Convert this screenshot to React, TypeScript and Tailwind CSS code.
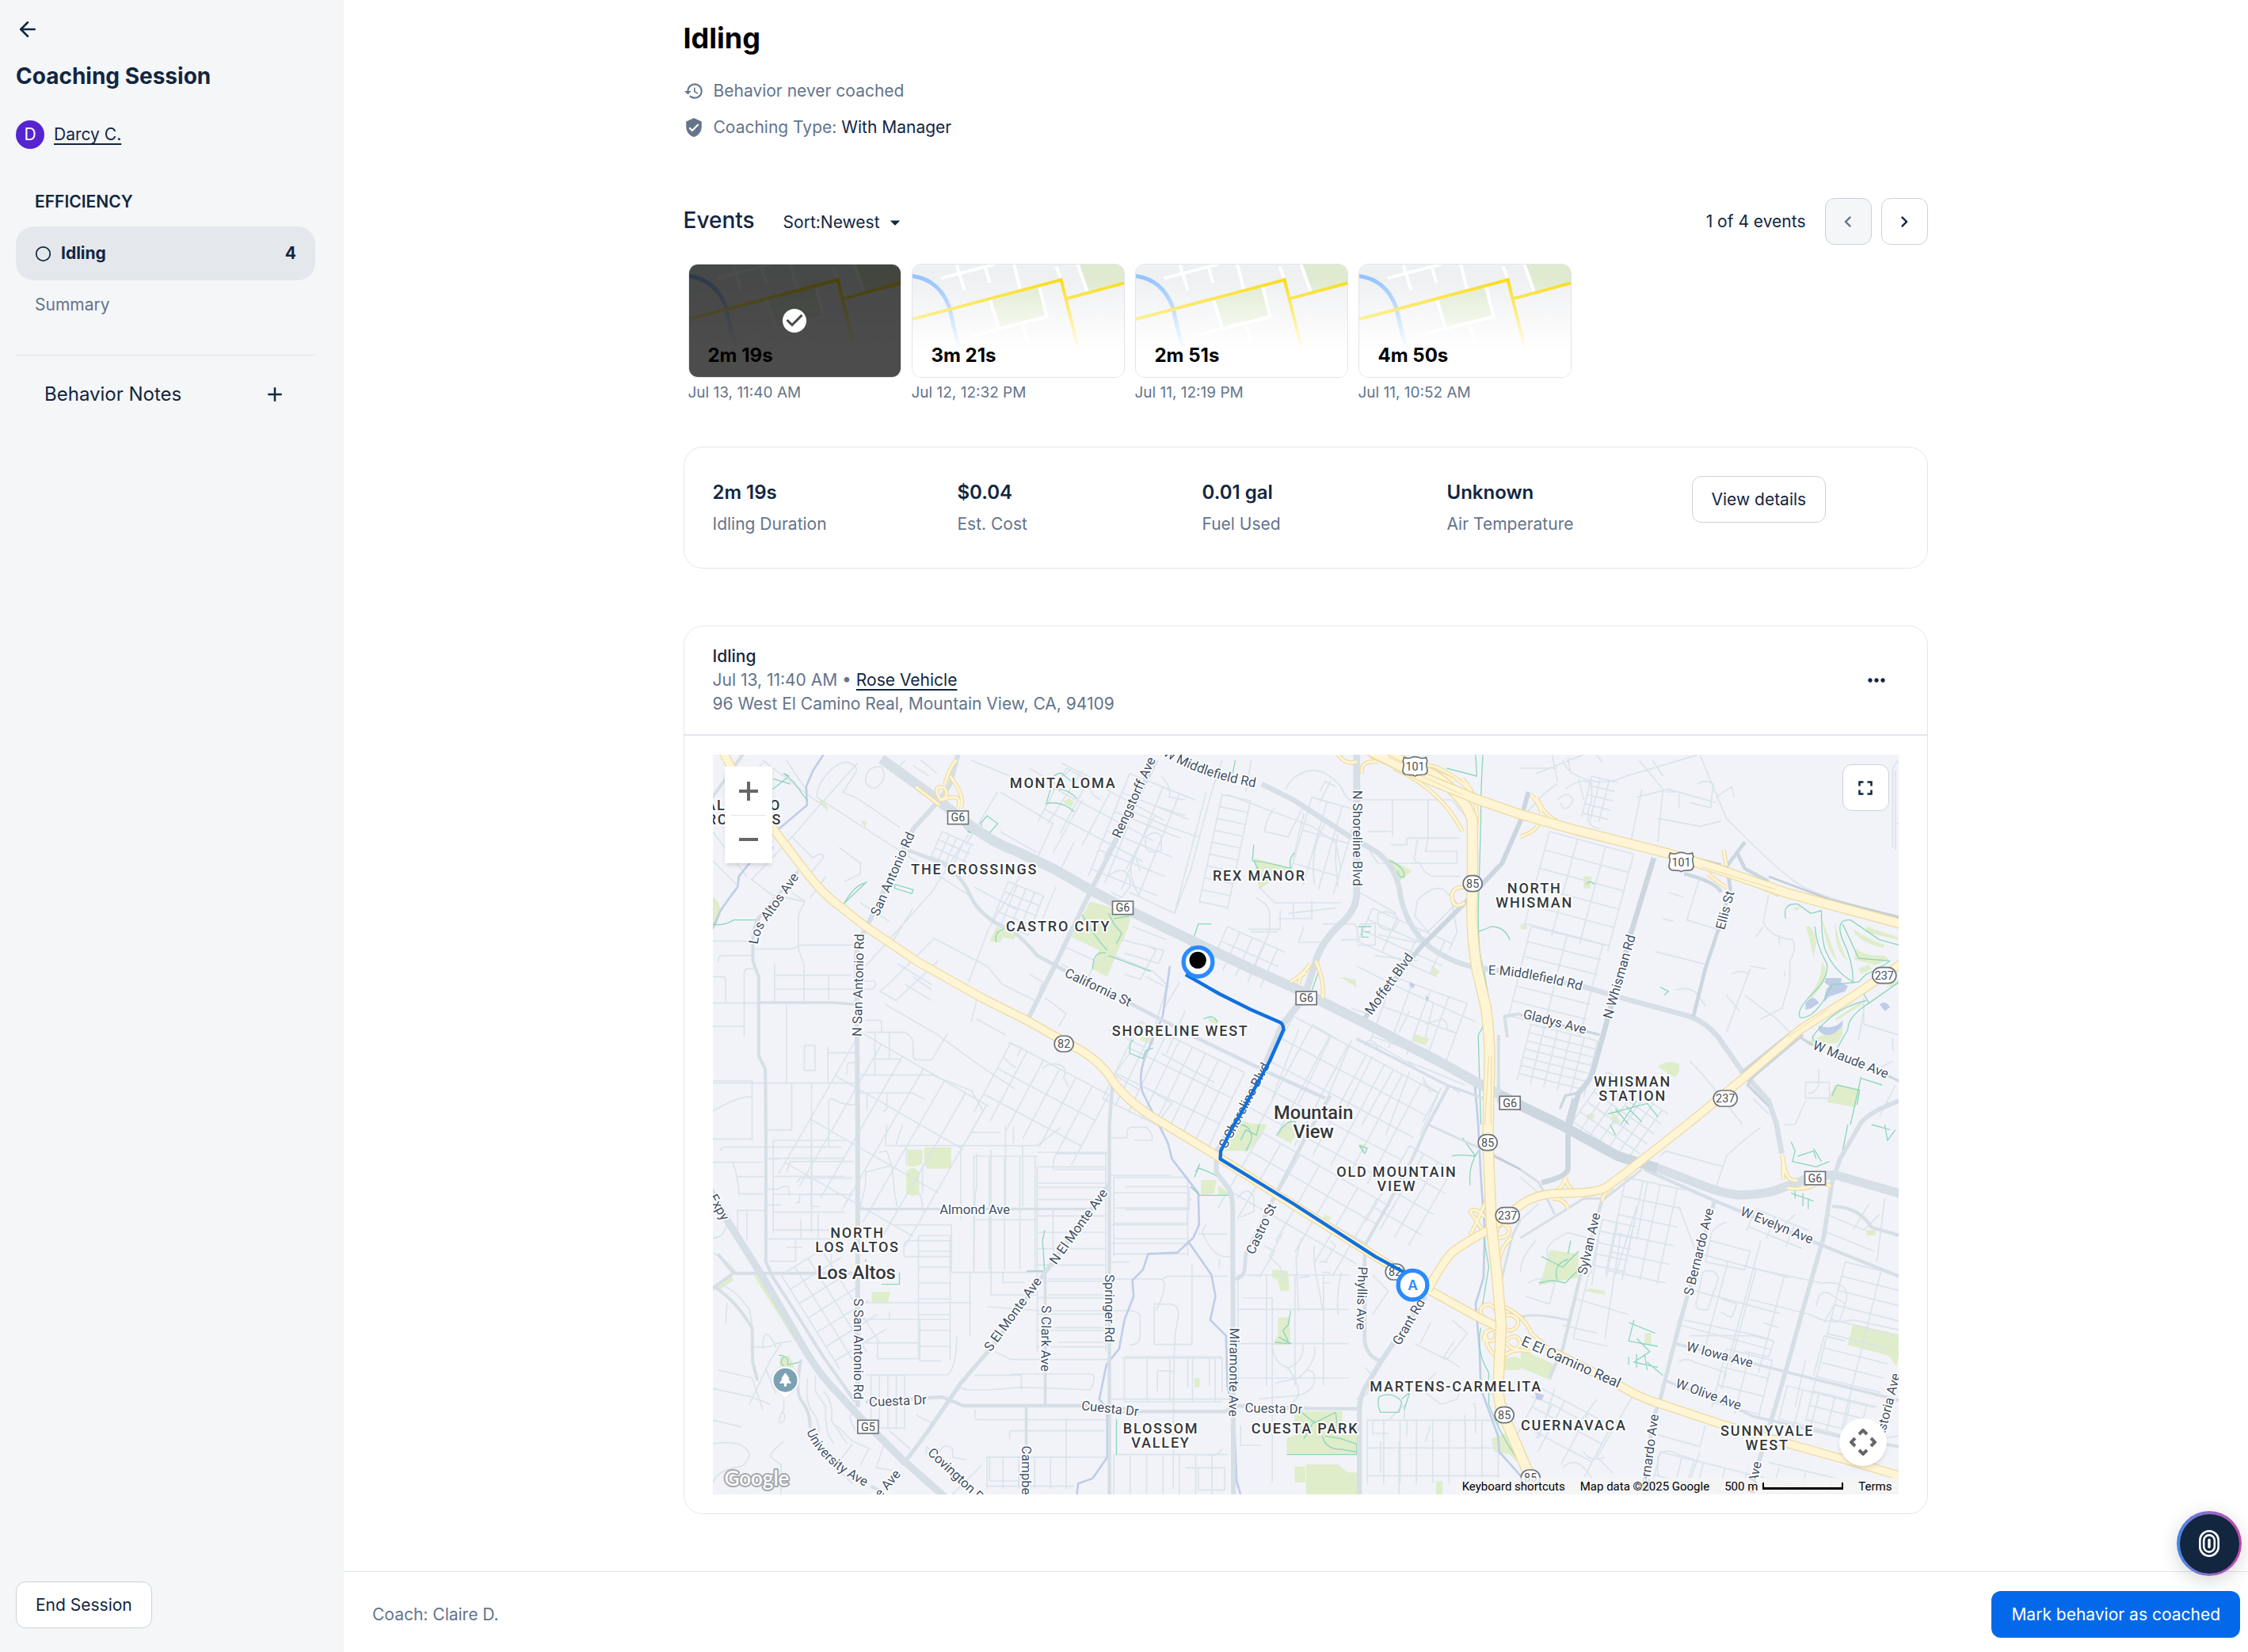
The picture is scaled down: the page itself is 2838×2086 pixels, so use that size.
import React from 'react';
import { ArrowLeft, Circle } from 'lucide-react';
import {
  MdAdd,
  MdArrowDropDown,
  MdCheckCircle,
  MdChevronLeft,
  MdChevronRight,
  MdFullscreen,
  MdHistory,
  MdMoreHoriz,
  MdVerifiedUser,
} from 'react-icons/md';

const events = [
  { duration: '2m 19s', date: 'Jul 13, 11:40 AM', selected: true },
  { duration: '3m 21s', date: 'Jul 12, 12:32 PM', selected: false },
  { duration: '2m 51s', date: 'Jul 11, 12:19 PM', selected: false },
  { duration: '4m 50s', date: 'Jul 11, 10:52 AM', selected: false },
];

const stats = [
  { value: '2m 19s', label: 'Idling Duration' },
  { value: '$0.04', label: 'Est. Cost' },
  { value: '0.01 gal', label: 'Fuel Used' },
  { value: 'Unknown', label: 'Air Temperature' },
];

/* ---------- map data (map units, 3 per screen pixel) ---------- */

// residential blocks: origin, size, rotation, spacing between streets
const blocks = [
  { x: 620, y: 1090, w: 560, h: 620, a: 30, sx: 92, sy: 190 },
  { x: 1190, y: 1130, w: 420, h: 300, a: 28, sx: 70, sy: 110 },
  { x: 1180, y: 520, w: 150, h: 160, a: 22, sx: 36, sy: 40 },
  { x: 930, y: 330, w: 130, h: 110, a: 24, sx: 30, sy: 34 },
  { x: 1400, y: 90, w: 420, h: 230, a: 28, sx: 95, sy: 88 },
  { x: 1640, y: 110, w: 270, h: 420, a: 22, sx: 68, sy: 78 },
  { x: 1990, y: 190, w: 110, h: 420, a: 12, sx: 110, sy: 46 },
  { x: 2330, y: 200, w: 180, h: 330, a: 16, sx: 60, sy: 130 },
  { x: 2010, y: 690, w: 240, h: 160, a: 24, sx: 52, sy: 60 },
  { x: 1680, y: 1050, w: 440, h: 330, a: 26, sx: 55, sy: 108 },
  { x: 2260, y: 1030, w: 620, h: 430, a: 28, sx: 78, sy: 96 },
  { x: 2140, y: 1470, w: 560, h: 330, a: 30, sx: 84, sy: 84 },
  { x: 2700, y: 1520, w: 210, h: 330, a: 30, sx: 62, sy: 90 },
  { x: 2560, y: 620, w: 330, h: 140, a: 24, sx: 100, sy: 46 },
  { x: 2640, y: 880, w: 300, h: 260, a: 20, sx: 74, sy: 120 },
  { x: 3230, y: 330, w: 330, h: 380, a: 15, sx: 110, sy: 72 },
  { x: 3160, y: 690, w: 290, h: 360, a: 14, sx: 140, sy: 58 },
  { x: 3390, y: 120, w: 100, h: 160, a: 14, sx: 34, sy: 36 },
  { x: 3160, y: 1060, w: 260, h: 220, a: 14, sx: 52, sy: 32 },
  { x: 3450, y: 1240, w: 280, h: 250, a: 35, sx: 42, sy: 46 },
  { x: 3520, y: 1640, w: 230, h: 370, a: 12, sx: 66, sy: 72 },
  { x: 3430, y: 1800, w: 130, h: 210, a: 12, sx: 60, sy: 44 },
  { x: 3800, y: 1930, w: 350, h: 380, a: 15, sx: 110, sy: 140 },
  { x: 4350, y: 1960, w: 250, h: 620, a: 14, sx: 140, sy: 56 },
  { x: 4130, y: 2430, w: 340, h: 130, a: 14, sx: 62, sy: 130 },
  { x: 3900, y: 2290, w: 180, h: 230, a: 14, sx: 90, sy: 70 },
  { x: 4010, y: 1760, w: 220, h: 90, a: 22, sx: 80, sy: 36 },
  { x: 3200, y: 2440, w: 300, h: 220, a: 28, sx: 100, sy: 78 },
  { x: 3650, y: 2680, w: 560, h: 150, a: 14, sx: 84, sy: 90 },
  { x: 2540, y: 2560, w: 500, h: 240, a: 0, sx: 62, sy: 105 },
  { x: 2050, y: 2010, w: 420, h: 420, a: 0, sx: 108, sy: 130 },
  { x: 1580, y: 1640, w: 280, h: 300, a: 0, sx: 280, sy: 58 },
  { x: 1620, y: 2320, w: 370, h: 170, a: 0, sx: 86, sy: 170 },
  { x: 1580, y: 2690, w: 430, h: 160, a: 0, sx: 62, sy: 160 },
  { x: 840, y: 1860, w: 120, h: 470, a: 0, sx: 120, sy: 60 },
  { x: 1050, y: 1560, w: 240, h: 430, a: 0, sx: 58, sy: 240 },
  { x: 1290, y: 1600, w: 260, h: 700, a: 0, sx: 260, sy: 62 },
  { x: 660, y: 2390, w: 130, h: 200, a: 0, sx: 32, sy: 200 },
  { x: 320, y: 2010, w: 230, h: 420, a: -32, sx: 60, sy: 64 },
  { x: 290, y: 1500, w: 270, h: 350, a: 0, sx: 145, sy: 68 },
  { x: 1100, y: 2700, w: 330, h: 120, a: 0, sx: 60, sy: 110 },
];

const minorRoads = [
  // west side
  'M60 745h150M210 775h150l40 -15h190M360 560l50 35 -25 50v130l22 60v150M295 830v150M295 875h290M295 927h370q20 -15 10 -30h-60M500 875v90M60 880h40q10 0 10 10v85M180 1105v-240q0 -15 15 -15h30M82 825v-10q0 -15 15 -15h115M60 980h175M60 1068h120M340 985v300M60 1283h545M408 1140h40v95h-40zM497 1145v135M497 1168h105M570 1250v-30q0 -15 15 -15h20',
  'M620 1252h270l150 60 45 75 -60 110M675 1090v160M675 1192h95M640 1090h150q30 20 30 40v50q0 15 15 15h55l60 -100M730 1090v100M640 1045h50q10 0 10 10v35M715 985l190 110 180 130 120 80M360 1285v175h-95M435 1285v460M210 1500v-225h-150M60 1390q100 -60 150 -55M605 1320h210l50 25M645 1320v70M720 1320v60q0 8 -15 8M500 1520v-165q0 -20 30 -5 20 15 70 15',
  'M60 330l130 170M205 510l80 60 125 25M210 510l170 -180 50 -60 180 -200M550 180l60 25 160 110M455 200l590 380M455 200q0 -50 50 -100 60 -60 100 -10v10l-50 80M900 735l200 105 60 70 120 60M900 735l-170 170 -35 30 60 35 160 -150M640 840l250 -280 140 -220M1030 900l75 -200 120 -200M1050 540l160 85M760 830l130 80M790 910l100 60M820 880l70 50M820 620l-80 130M250 60l210 160M340 60l80 120M190 140l60 -70M120 60l60 90M60 440l90 90M360 350l60 60 20 20q40 -30 40 0l-50 60M540 390l80 60v40l-60 30M430 580l60 -80M620 600l110 70',
  'M640 140q0 -60 60 -55 20 30 0 60 -30 40 -60 0zM790 60l-30 30 60 50M820 80l60 40M850 60l60 50M1040 60l220 90M1140 180l-120 200M1150 180l200 120 -60 130M1260 90l100 60 60 -60M1330 300l130 -200M1150 330l140 80M1440 160q40 -30 60 30l30 20M1460 210l-110 200M1380 70l180 90M1290 430l80 60 60 -120M1360 540l-50 120M1380 760l130 60 -30 70 -100 -60M1260 870l50 30 -20 60M1320 960l80 60 -30 50M1040 1050l20 -80M1060 1040l110 60M1310 1230q10 -20 50 -20 50 10 30 50l20 40M1160 1180q20 30 50 45M1180 1130l50 20 -15 30',
  'M60 1490q0 5 5 5h145M90 1540q0 -15 20 -15h440M60 1583h190M135 1583q20 40 25 120h95M155 1637h100M340 1620l15 -40h240M380 1660l10 -17h200M375 1735h15v-30h200M270 1685h40q45 -30 40 20M435 1560v190h30M270 1570h40M270 1745h50M60 1870q40 0 50 -40l20 -25M155 1845v-80h105M190 1880v-110M270 1873h240v120M375 1873v85h-100M340 1905h60M395 1800v70M60 1925q70 40 90 80M460 1780v90M720 1520h570M795 1525v70M740 1595l-100 25v50l-15 60 -5 25M690 1545l30 -5 20 60 10 100 10 50M755 1515l25 -75M865 1590l-10 10v100M840 1700q15 10 15 60M720 1440l-5 80',
  'M750 1820h215v180M785 1940v-40q0 -20 20 -20h160M785 1940h180M630 2000h-20M965 2000h345M1000 1520v280M1060 1550v130q-10 20 -10 320M1110 1820q10 -30 0 -60M1115 1535v550h180M1170 1440v310M1160 1998v40h80M1235 1520v230M1290 1545h280M1290 1678h270M1350 1610q0 -60 20 -60h180v60h-200M1380 1450l-90 70M1040 1470h110M1200 1510v-60M1350 1760v220M1330 2025h220M1330 2085h210M1330 2145h220M1350 2210h200M1370 2265h190M1100 2130l200 15M1130 2300l60 30h370M845 2115h115M845 2180v155h80M630 2115h410M630 2178h330M685 2267v60h150M640 2267h200M640 2388h310q35 -30 35 -148M730 2178v-30M1035 2000v240M990 2430q20 15 40 15h80l120 -10 260 10q15 -20 15 -50 0 -10 -15 -10h-300M1050 2390h180v55M1055 2520v30q0 8 10 8h490M1400 2558v140M1185 2630v-20q0 -10 10 -10h350M1095 2700h460M1110 2700v85q0 5 5 5h130',
  'M60 2070l30 -30 60 40 50 60 10 60M115 2115l-5 80M60 2440l140 30 80 30M80 2370l130 30 40 120M60 2560l110 25M60 2650q120 -20 140 40 -10 50 -60 50 -60 10 -80 60M210 2280q60 10 90 -10l60 -10M260 2360l40 100M200 2500l80 -170 40 -60M250 2290q0 -60 20 -55 20 20 30 50M330 2480v40q-30 50 -10 50 25 -10 5 -45M330 2640q-60 50 -50 60l40 30v120M420 2400q-10 100 20 130 30 40 20 90 10 80 70 120l60 60M450 2390v60l40 60q-10 90 30 140M480 2450q40 40 30 110l60 90M530 2580l60 60 70 30M590 2650l-60 80M650 2670l-30 60M710 2650l-30 90 60 10M730 2600l80 70M600 2600l-20 -50 20 -40M830 2540l60 30M920 2680q20 -40 50 -10v30l50 10M870 2690v-30l80 60M1080 2730l-60 60 -60 60',
  // centre
  'M1640 560l170 80 120 -460M1680 480l-20 -60q-40 60 20 160M1640 250l140 60 120 40M1560 500q30 -30 60 -20 30 20 20 60l-30 40 -40 -20M1730 230l120 40M1700 350q40 -30 60 0v50q-40 20 -60 -10zM1760 120q40 40 30 80l60 10M1990 60l-40 120 -80 300 -60 160M2010 190l320 120 90 60 20 100M2100 60l-20 120M2230 170q30 -60 90 -70 60 -10 120 60 20 50 40 50h380l50 60M2360 180l20 -40 40 20M2400 140l-40 80M2150 330q10 -60 40 -90M2150 330l90 20 60 -120M2300 260q-20 80 -40 170M2380 300q-60 100 -40 230M2430 340q-20 60 0 200M2520 210h320M2635 210v140M2770 210v145M2540 330h90M2540 390l40 60h160q20 50 60 50h90M2630 380h60v-25h200M2730 360l-10 60q-10 30 30 30h130v-45h-120l10 -50',
  'M2130 540l60 60h250M2150 600q20 20 20 50v60l-60 130M2200 600h130v60h-130M2330 590v60M2260 600v60M2120 580l40 30M2090 700h120v-70M2100 710h100M2240 640l180 -20M2300 690l-20 60h80M2370 680h120q20 20 10 60h-60M2500 760h70v-80h-60M2510 560l140 80M2580 640q60 -20 80 30l-20 30q-40 10 -60 -20zM2730 590q60 -60 100 -40l50 50 -110 110 -50 -60zM2860 600l20 110 -30 70M2580 720l140 30 40 -20M2570 800l160 20M2500 840l160 80 220 100 70 30M2620 940l40 -60M2480 1000l60 20M2700 1010l-40 80M2760 1060l60 -20q30 10 20 40M2790 980l-30 130M2500 1120l80 20 140 80M2530 1140q10 -30 40 -10l10 20M2690 1200l220 90M2750 1260l30 60M2830 1280l60 40',
  'M1610 740l160 40 -20 50 -130 -40M1650 690l130 50M1700 760l40 20 -60 110 -60 -20M1700 880l80 40 -60 200M1580 800l150 60 60 60M1830 900l-60 100M1850 1010l-70 160M1560 1080l140 70M1640 1170l-60 80 100 60M1760 1170l200 110M1700 1300l100 60 -60 80M2280 1080l-100 260M2330 1060l100 60M2400 1110l-120 250M2480 1120l-100 240M2560 1180l-110 220M2640 1230l-120 210M2700 1240l-90 240M2750 1280l60 40 -60 110M2820 1300l-80 180M1570 1490h60v-20q0 -15 15 -20h60l20 30v20h-70',
  'M1560 1632h240M1625 1680q0 -5 5 -5h230M1625 1762h240v-85M1570 1820h290q-5 -60 10 -100M1640 1960l-80 2M1580 2025h180q30 20 -20 120M1765 2025l15 -10h230M1730 2120h60q35 0 35 40l-10 60q-10 20 -10 600M1733 2128v145h145M1876 1970v300M1930 1820q-20 20 -10 40 40 90 100 80M1900 1855h110M1980 1950v30M1560 1890h300M1560 2145h80q40 0 40 30v60q0 40 -40 40M1570 2480h470M1745 2450v-75q0 -5 60 0M1860 2435v-110M1942 2430v-105M1610 2325h380v130M1850 2740h150v80q0 5 -5 5h-90q-5 0 -5 -5v-80M1930 2690q40 10 60 -20M2070 2097h110v700M2178 2270q10 80 60 90 50 70 40 110l-60 70M2295 2275q10 60 -60 90M2340 2280q10 60 -60 120l-90 20',
  'M2060 2580v75h80M2130 2480l100 -10q100 0 110 -60 5 -40 -30 -40M2050 1720q30 -50 60 -10v60l-50 20M2150 1900l40 20 -60 100M2220 1850l-50 90 40 40 20 60M2290 1870l-20 80 10 200M2340 1900q-10 40 20 180l10 60M2400 1880l20 20 -40 60M2440 2000q-20 120 -10 160M2090 2012h50M2280 2020l40 -5M2360 1960h30M2370 2000h30M2370 2040h30M2560 2010l60 60 -60 90M2620 2010l70 50M2720 2270l120 60 80 -100 -60 -50M2780 2190l-40 80M2870 2260l-40 60 60 40M2800 2380l-60 60 80 60 60 -20 20 -60M2680 2560v-60l-60 60h-60v50h60M2530 2360l30 30 -20 70 -40 20M2950 2610v-80q0 -40 -10 -30M2690 2560v60M2590 2760v-120M2660 2640v200M2780 2580l-20 60M2910 2540v100',
  // east side
  'M3120 90h140M3240 40l20 100M3180 110l200 -80M3280 60q20 60 120 80 60 10 120 -20l270 -80M3340 130l20 80M3410 40l20 30M3300 50l10 60M3120 280l60 -60q30 -40 80 -70M3290 170q60 -50 100 -20v60q-40 100 30 110M3260 210q40 -40 60 0 -30 60 -50 10M3560 200l120 -30 180 50M3570 60l90 110 -20 200M3620 60l40 60M3670 180h50v60M3640 280l160 30 80 -20M3790 150q30 -20 60 0l-10 90 -80 -20M3800 40l100 240 80 80q100 100 180 160 80 60 394 130M3860 200l60 -40 10 40M3580 170l-40 190',
  'M3680 560l60 20M3800 500l-50 165 130 40M3660 660l40 10M3630 785l200 50M4060 570l-20 100q20 60 110 70 20 30 -10 80v80l-30 100 -80 40M4010 730l30 -40M4100 720v40M3970 950l120 90 60 60M3990 850l-90 240M3920 870q40 -20 60 0M3900 950l50 60M3710 930q60 -20 90 30l20 30M3990 840l60 10M4120 860v20M4420 960v100l130 40M4530 1110v50M4420 1010l-20 110M4540 1290l-60 120M4250 1230v60q-20 40 -40 30M4200 1280h90v60h-90zM4200 1350l-40 90h-40M4530 1200l-40 20 10 40M4000 1340l60 60M3760 1200q40 30 200 240M4540 100v300M4560 300h-20M4530 390v-300l20 -30',
  'M3120 1640l70 60M3120 1800l70 -60M3180 1880q-60 60 -60 120M3150 2040q40 -30 100 0l-20 80 -90 -30M3240 1960q-60 -60 60 -110l120 30M3420 1840l-30 210M3330 2100l200 60M3380 2000l-60 250 130 30M3280 2200l130 30M3500 1850l-60 400M3560 1750l-80 260M3600 1660l-40 220M3860 1680l40 -120q60 -60 130 -110M3650 1560l20 -20 220 60M3720 1750l60 160M3900 1810q-60 20 -60 60l-20 90 150 30 20 -70 -150 -40M3810 2000q40 -20 60 20l-40 120q-60 10 -40 -40zM3880 2100l60 20 -20 50q-30 -10 -40 -20M4030 1880l-140 520M3980 1980l280 60q120 -10 90 80l-20 60M4240 2130q10 -70 50 -50l60 40M4270 2190l40 -70M3740 2180l280 60 60 20M3980 2100l240 60q60 40 160 20l180 40M4100 2210l-60 -20M3760 2240h240l80 20 -20 60 -90 -20M3720 2340q20 -20 60 0l120 40 -20 60M4160 1780l-60 60M4200 2330l-40 180M4230 2390l40 -150 80 20M4440 1740l-60 100M4280 1780l140 60 60 -60M4260 1840l200 80M4500 1720l-30 240',
  'M3160 2470l80 30 -60 130M3240 2500l110 60 60 -80M3250 2440l-60 190M3550 2460l-140 240 60 60M3440 2700q-60 20 -80 -20M3620 2610l180 50 20 -80M3640 2700q20 -40 80 -10l60 20 -30 90 -110 -30zM3800 2680l-60 170M4060 2720l300 70 190 30M4100 2740l-30 100M4200 2760l-20 80M4300 2790l-20 60M4400 2640l150 -20M3280 2740q60 -60 120 60M3240 2780l60 60',
];

const mainRoads = [
  { w: 18, d: 'M990 39L960 150 920 210 820 320 640 700Q605 760 605 800L610 1440V2510' },
  { w: 12, d: 'M385 480L232 660Q213 700 213 740V820L235 880V1180L260 1230 262 1440V1960L290 2020 380 2160 480 2320 600 2490' },
  { w: 11, d: 'M235 978H520L605 985' },
  { w: 12, d: 'M130 2003H600M60 2060L140 2003 80 1930M75 2060Q150 2110 210 2210L212 2340 230 2410M395 2330Q370 2460 400 2490 430 2530 430 2590M660 2810L700 2830' },
  { w: 16, d: 'M780 2730L870 2610 1000 2420 1120 2280 1320 2000 1563 1665' },
  { w: 10, d: 'M620 1760H1490' },
  { w: 11, d: 'M1320 2000V2500M1248 2505V2841' },
  { w: 13, d: 'M1575 1290L1563 1440V2841' },
  { w: 13, d: 'M640 2490L930 2472 1010 2505H1560L1680 2527H2000L2050 2505 2320 2515 2510 2517' },
  { w: 18, d: 'M1968 1540V1620L2020 1690Q2030 1720 2030 1760L2033 2841' },
  { w: 14, d: 'M2040 2025Q2070 2020 2075 1990L2080 1930 2180 1730 2310 1480 2400 1330' },
  { w: 26, d: 'M2500 39V560Q2500 620 2450 670 2370 740 2345 820L2300 960 2220 1060 2160 1200 2040 1430 1968 1550' },
  { w: 20, d: 'M2140 150L2260 210 2460 340 2580 410Q2640 460 2660 540 2680 690 2780 770 2880 840 2990 850L3120 868 3350 915 3540 970 3760 1030Q3820 1050 3870 1110L3960 1240 4060 1350 4090 1440 4110 1550' },
  { w: 18, d: 'M1255 1040L1350 850 1490 560 1560 420 1740 60' },
  { w: 14, d: 'M800 400L930 450Q1000 490 1040 580 1080 660 1200 710 1240 740 1290 800L1400 860M1640 980L1890 1110 2160 1240 2380 1340' },
  { w: 10, d: 'M2500 1115L2840 1290 2980 1340' },
  { w: 14, d: 'M2520 1910L2530 1910V2260Q2540 2320 2590 2335' },
  { w: 12, d: 'M2535 1890L2620 1740 2710 1570 2770 1440 2850 1290' },
  { w: 19, d: 'M2760 2090L2590 2340 2530 2440Q2510 2480 2510 2520V2841' },
  { w: 12, d: 'M3070 1110L3060 1030 3120 1020M3037 1360V1100' },
  { w: 13, d: 'M3590 1610L3860 1730 4220 1880 4554 2015M4300 1750Q4400 1750 4450 1830L4554 1860' },
  { w: 17, d: 'M4554 1350Q4420 1400 4400 1450L4330 1570 4300 1660 4270 1860 4190 2140 4120 2390 4070 2560 4010 2760 3990 2841' },
  { w: 15, d: 'M3855 1730L3720 2200 3650 2480 3620 2560 3590 2841' },
  { w: 13, d: 'M3430 1720L3340 2040 3280 2290 3230 2400' },
  { w: 11, d: 'M3710 2270L4020 2350 4554 2485' },
  { w: 11, d: 'M3670 2410L3950 2520 4000 2545 4320 2620 4554 2660' },
  { w: 9, d: 'M3120 2170Q3160 2150 3300 2180M3040 2060L3090 1860 3120 1800M2770 1440L3000 1545 3120 1610 3190 1660 3250 1780M3120 1870L3360 1720H3440L3580 1610' },
];

const darkRoads = [
  { w: 20, d: 'M3625 430L3540 710 3450 1040 3400 1220Q3390 1270 3340 1320L3300 1470V1610Q3290 1640 3200 1660' },
  { w: 14, d: 'M3905 480L3915 550 3870 700 3820 850 3775 1030M3895 470L3940 410 3970 470 4060 520M3740 490Q3860 520 3880 560M3940 410L3970 370' },
  { w: 18, d: 'M2520 1050L2740 770 2910 600 3050 450 3120 290 3150 180' },
  { w: 10, d: 'M3120 1025L3420 1100M4180 1110L4230 1140M4190 1100L4000 1260 3980 1290 4060 1370M3960 1240L4140 1095M4510 1255L4554 1275M3270 1380L3290 1330 3340 1320M3290 1450L3320 1340' },
];

const highways = [
  { w: 58, d: 'M2560 20L2740 105 2860 155' },
  { w: 30, d: 'M95 20L130 85 290 320 400 465Q480 570 545 615L640 690 840 825 1080 960 1250 1045 1400 1130Q1500 1175 1560 1250 1620 1350 1750 1425L1980 1565 2220 1720 2460 1870 2660 1995 2770 2065 2960 2170 3060 2220M3240 2300L3320 2340 3490 2425Q3560 2470 3640 2495L3880 2575 4120 2645 4370 2715 4570 2775' },
  { w: 30, d: 'M2770 2065Q2820 1970 2860 1925 2920 1880 3000 1840L3120 1745Q3180 1700 3280 1700 3400 1700 3440 1680 3500 1640 3560 1590L3770 1425 3970 1260 4180 1080 4370 960 4570 825' },
  { w: 38, d: 'M2780 110Q2910 190 2938 290V560Q2930 700 2955 850L2990 1000Q3010 1150 3000 1300L2997 1510 3010 1820 3030 2000 3047 2200 3035 2440Q3040 2510 3060 2550L3120 2690 3190 2850' },
  { w: 34, d: 'M2540 20L2740 120 2960 210 3120 265 3320 322 3680 413 3890 480 4120 560 4320 615 4570 682' },
];

const ramps =
  'M2580 40L2800 85Q2900 130 2960 210M2520 110Q2510 60 2580 65M2430 40Q2460 80 2500 65M2640 90Q2820 170 2900 330M2900 130Q2970 200 2950 330M3160 190Q3190 220 3200 260M3120 350Q3200 320 3190 280M3180 200Q3210 270 3260 290M3890 400L3900 460M3830 490Q3890 540 3900 540M3790 440L4100 570M2910 600Q2860 630 2860 570 2870 530 2920 545M2250 900Q2300 870 2325 830M2280 905Q2290 860 2310 870M2370 960Q2380 900 2345 820M920 205Q890 150 940 165 960 200 920 210M930 210Q1010 180 990 240M960 120Q1020 200 1000 240M940 150Q960 80 985 60M830 160L920 230M2990 1860L2930 1770Q2950 1750 2985 1790M2930 1860L3000 1710M3020 1870Q3090 1870 3075 1830 3040 1800 3030 1850M3040 1950Q3050 1900 3085 1870M2980 2170Q2950 2130 3000 2120 3040 2140 3040 2200M2990 2220Q2980 2280 3030 2320M3060 2160Q3120 2160 3110 2200 3080 2240 3050 2200M2980 2260Q2980 2220 3020 2215 3040 2260 3000 2260 2985 2250 2990 2230M3060 2260Q3110 2220 3120 2270 3100 2310 3070 2270M3050 2330Q3080 2280 3160 2300M3060 2130Q3140 2170 3160 2230L3240 2300M3290 1640Q3300 1700 3360 1695M3290 1640Q3280 1690 3230 1700M3300 1760Q3290 1720 3240 1720M3430 1730Q3430 1700 3470 1680M4110 1555L4120 1600Q4130 1660 4170 1650M4115 1560V1650M4130 1680Q4200 1690 4240 1665 4280 1660 4295 1675';

const parks =
  'M1490 595L1645 640Q1640 700 1600 770L1555 880 1495 850 1525 780 1420 730ZM1135 690L1210 725 1200 740 1160 730 1150 750 1110 745ZM455 215l30 -5 15 45zM620 290l25 0 -5 25zM60 575Q95 600 90 640L75 690H60ZM1390 215l20 -12 20 15 -12 20 -24 -12zM2110 430l140 40 15 -60 -10 60 -55 30 -70 50zM2620 430l90 50 -50 40 -40 -60zM1680 1105l50 10 0 25 -50 -20zM2435 880l60 10 5 30zM2715 1095l60 20 -15 25 -45 -15zM2785 835l15 15 15 10 -20 20 -15 -15zM1940 1035l40 10 -10 15 -30 -10zM3360 500h30l-5 45h-25zM3120 680h25v20h-25zM3640 1220q40 -30 80 -10 10 40 -20 50zM4310 1290l95 15 -15 70 -110 -20zM3460 1380l40 50 -30 10zM3370 1400h30v20h-25zM2000 1540l60 -120 30 15 70 5 -20 40 -50 60zM2190 1480l60 -60 20 60 -20 30zM2505 1515h30l-10 30zM1910 1650h60l-10 50 -50 8zM1975 1670l45 30v8h-45zM800 1535h55v55q-30 15 -55 5zM862 1527h102v80h-90l-12 -20zM793 1620q25 -30 50 0v80q-20 20 -50 0zM663 2074h70l-8 42h-62zM2180 1990l60 5 5 75h-35q0 -40 -30 -50zM2202 2170h45v105h-65l20 -40zM1885 2400h20v35h-20zM2375 1780l30 12 -10 12 -20 -8zM2200 1695l30 10v10zM2260 2525h185v90h60v75h-270v-60l40 -20zM2265 2735h40v60h-40zM2308 2728h120l40 30h40v90h-200zM3010 2630l50 -20 50 60 30 80 -60 -60 -60 -10zM3230 1915l110 15v90l-60 10 -90 20 20 -60zM3380 2060l60 10v15l-80 -15zM4380 2195l174 40v70l-10 50 -30 -40 -155 -40zM3120 2290l130 60 -15 60 -115 -50zM3590 2230h25v40h-25zM4430 1840h35v20h-35zM2800 2790h25v60h-25zM315 2320l35 -5 20 45 -55 -5zM60 2060l70 -50 10 20 -60 40zM230 2010l150 245 -5 10 -160 -255zM3060 2330q40 -20 60 0v40h-60zM4200 690q30 -10 40 60l-10 60q-15 -80 -30 -120zM4260 650q20 60 60 170 -40 -30 -60 -170zM4310 670q20 100 50 150 -50 -30 -50 -150zM4380 700q60 40 120 60l-5 10q-100 -20 -115 -70zM4430 690l120 40v10l-125 -30zM4390 770q20 30 110 30l15 15 -50 20 -80 -20zM4260 820q30 40 5 90l-40 50h-20q60 -60 55 -140zM4150 620l30 -5 -10 15zM4280 920l20 10 -30 30zM4200 1130l110 -50 30 -10v30l-20 30 -110 10zM4400 850l40 -15 10 15 -40 20zM4310 1040l100 -65 5 10 -95 60zM4500 920l50 -30v20z';

const ponds =
  'M4200 980q30 -40 50 0l-30 20 -20 5zM4270 900q30 -30 60 0l30 15 -10 20 -60 20 -20 20q0 -40 20 -60zM4275 885h60v15h-60zM4250 1065q60 20 90 -20v20q-50 60 -90 20zM4480 985q20 -20 40 10l-20 15zM2700 900l20 10 -5 15 -15 -10zM2760 950l15 10 -10 15zM3175 2455l35 10 -10 20 -20 -5z';

const trails =
  'M288 170L350 120 330 110 370 145 420 215M290 130L355 150M60 680Q100 690 140 665L240 665M555 605L645 520M560 600Q600 530 640 525M750 530L820 550 815 565 750 545ZM1080 310L1075 300 1100 270 1140 300 1110 335 1080 318M1325 220L1340 170Q1400 160 1440 205M1320 225Q1380 210 1430 255M1340 150Q1350 110 1380 108L1420 140M1460 645Q1500 720 1555 780M1500 850Q1500 780 1550 790M1135 750Q1120 700 1190 695M1010 310L1040 335 1025 330M880 250L905 235 900 222M1560 640L1580 680 1610 715 1590 755M1560 800L1720 860M1580 660L1640 650M2030 110L2040 60M2110 380L2105 440Q2180 450 2250 470 2240 430 2265 410M2110 440L2150 520M2505 690H2555M2520 690V730H2545M2530 710H2550M2620 440Q2680 460 2680 500 2660 510 2655 480M2950 40L2955 120 2840 90M2978 40Q2970 150 2970 290L2960 640Q2960 800 2980 850L3000 960Q2990 1060 2960 1100L2970 1440M2960 710L3010 690Q3060 690 3080 740M1640 1170Q1640 1120 1655 1120M1640 1170L1690 1190 1700 1160 1730 1150M1920 1040Q1960 1020 1970 1050M1860 800L1900 680 1950 680M2320 960L2360 850 2345 820M4125 660Q4110 600 4170 605L4220 640 4260 630Q4260 760 4280 790 4310 860 4380 900 4380 820 4340 740 4310 660 4370 665L4480 740 4554 760M4340 680Q4370 740 4400 810L4520 820Q4480 850 4430 870L4400 900 4300 910Q4240 1040 4180 1035 4160 1010 4230 940 4290 880 4280 830 4240 760 4235 690M4420 945L4440 980 4554 900M4440 980Q4360 1030 4360 1080L4320 1150M4430 970Q4300 1000 4225 1110L4240 1135M4410 1260L4370 1440M4300 1330L4320 1290 4405 1310 4395 1365M4410 1265L4490 1290M3650 920L3680 935 3665 950M3370 530Q3380 510 3400 530M3450 1400L3600 1360 3640 1410M3480 1380L3530 1440M3560 1350L3500 1440M3520 1370L3580 1430M1890 1620L1905 1590 1885 1640M1900 1605Q1980 1630 2010 1670M1870 1675L1905 1708H2020M2060 1440Q2110 1450 2100 1500L2080 1540M2060 1500L2080 1460 2120 1480 2130 1440M2200 1480Q2230 1420 2270 1430M2510 1520L2540 1530 2530 1550ZM2860 1560Q2880 1550 2950 1560L2900 1490M2930 1670Q2920 1600 2960 1540M2250 2145L2240 2200 2220 2220 2240 2260M2190 2265L2250 2270 2205 2245M2235 2690H2500V2650L2440 2630 2380 2620M2290 2530L2340 2570 2420 2530 2430 2610M2340 2560L2300 2630M2370 2620Q2380 2670 2440 2670L2500 2680M1590 2555V2690M1595 2530H1700M2980 1860L3000 1980 2970 2160M2970 2210Q2950 2300 3000 2380L3000 2500Q3040 2610 3110 2710M2585 2470Q2640 2450 2670 2490L2660 2530H2590Q2575 2500 2585 2470M2670 2480L2700 2455 2680 2520M3200 1940L3280 1980 3340 1920M3310 1880L3300 1930M3190 2040L3240 2030 3290 2040 3340 1990M3260 2030Q3240 1970 3300 1950M3530 2190L3630 2230M3550 2180L3530 2260 3640 2280M3560 2250L3610 2300 3550 2340 3640 2360M3530 2320V2350M3560 2310V2360M3590 2310L3600 2370M3600 2340L3660 2390M3460 1440L3480 1480M4145 1505L4160 1540 4150 1580 4240 1600 4290 1580M4170 1560L4230 1540 4240 1570M4230 1530L4260 1580M4145 1700L4230 1730M4160 1690V1720M4190 1700V1750M4210 1720V1760M4450 1440L4520 1460M4500 1440L4510 1500 4540 1460M4360 1440L4340 1540M1250 1995H1318L1310 1880 1318 1840M640 1960V1950M700 2045H768V2000M310 2315Q330 2310 345 2330V2350L390 2340M330 2355Q310 2340 330 2320';

const creeks =
  'M480 39L440 100 415 160 418 230 300 330M290 390L200 450 160 500 155 540 125 580 90 630 60 700M1792 840L1765 1030 1700 1180Q1670 1260 1690 1320L1750 1440 1785 1510 1800 1570 1900 1700 1903 1820 1880 1870 1820 1925 1710 1930 1690 1990 1650 2030 1655 2090 1620 2180 1600 2290 1563 2335 1552 2350 1525 2480 1555 2520V2700L1500 2780 1445 2800 1440 2841M1860 1880L1950 2010 1965 2090 1945 2180 2005 2240 2010 2430 2035 2550 2045 2790 2060 2841M2960 1440L2970 1640 2985 1840 2980 2020 2950 2120 2965 2290 2970 2440 3035 2620 3040 2680 3120 2770M2945 1260L2960 1440';

const areas = [
  { x: 160, y: 250, lines: ['PALO ALTO', 'ORCHARDS'] },
  { x: 1388, y: 166, lines: ['MONTA LOMA'] },
  { x: 1052, y: 491, lines: ['THE CROSSINGS'] },
  { x: 1370, y: 708, lines: ['CASTRO CITY'] },
  { x: 2131, y: 517, lines: ['REX MANOR'] },
  { x: 1832, y: 1104, lines: ['SHORELINE WEST'] },
  { x: 3173, y: 565, lines: ['NORTH', 'WHISMAN'] },
  { x: 3545, y: 1297, lines: ['WHISMAN', 'STATION'] },
  { x: 2652, y: 1637, lines: ['OLD MOUNTAIN', 'VIEW'] },
  { x: 609, y: 1870, lines: ['NORTH', 'LOS ALTOS'] },
  { x: 2876, y: 2450, lines: ['MARTENS-CARMELITA'] },
  { x: 3322, y: 2598, lines: ['CUERNAVACA'] },
  { x: 4055, y: 2620, lines: ['SUNNYVALE', 'WEST'] },
  { x: 2304, y: 2610, lines: ['CUESTA PARK'] },
  { x: 1758, y: 2610, lines: ['BLOSSOM', 'VALLEY'] },
];

// baseline of each street name, from its first to its last letter
const streets = [
  { name: 'San Antonio Rd', p: [690, 650, 825, 345] },
  { name: 'N San Antonio Rd', p: [624, 1105, 634, 720] },
  { name: 'California St', p: [1395, 880, 1632, 992] },
  { name: 'Rengstorff Ave', p: [1605, 355, 1738, 60] },
  { name: 'N Shoreline Blvd', p: [2484, 175, 2484, 535] },
  { name: 'Moffett Blvd', p: [2560, 1022, 2712, 812] },
  { name: 'S Shoreline Blvd', p: [2005, 1535, 2172, 1215] },
  { name: 'Gladys Ave', p: [3130, 1037, 3362, 1096] },
  { name: 'N Whisman Rd', p: [3467, 1038, 3555, 730] },
  { name: 'Ellis St', p: [3893, 703, 3930, 562] },
  { name: 'W Maude Ave', p: [4222, 1152, 4508, 1266] },
  { name: 'Castro St', p: [2112, 1932, 2195, 1752] },
  { name: 'Phyllis Ave', p: [2505, 1980, 2499, 2215] },
  { name: 'Miramonte Ave', p: [2020, 2212, 2016, 2545] },
  { name: 'Grant Rd', p: [2665, 2277, 2758, 2115] },
  { name: 'Almond Ave', p: [920, 1778, 1187, 1778] },
  { name: 'N El Monte Ave', p: [1362, 1972, 1557, 1700] },
  { name: 'S El Monte Ave', p: [1117, 2298, 1305, 2038] },
  { name: 'S Clark Ave', p: [1307, 2125, 1304, 2375] },
  { name: 'Springer Rd', p: [1547, 2010, 1547, 2262] },
  { name: 'S San Antonio Rd', p: [596, 2100, 596, 2480] },
  { name: 'Cuesta Dr', p: [655, 2508, 870, 2499] },
  { name: 'Cuesta Dr', p: [1460, 2521, 1668, 2544] },
  { name: 'Cuesta Dr', p: [2078, 2530, 2292, 2535] },
  { name: 'Expy', p: [46, 1717, 94, 1805] },
  { name: 'Covington Rd', p: [876, 2690, 1085, 2885] },
  { name: 'Monte Ave', p: [620, 2945, 775, 2765] },
  { name: 'Campbell Ave', p: [1230, 2672, 1230, 2945] },
  { name: 'Sylvan Ave', p: [3370, 2010, 3423, 1780] },
  { name: 'S Bernardo Ave', p: [3772, 2090, 3852, 1762] },
  { name: 'W Evelyn Ave', p: [3950, 1782, 4220, 1892] },
  { name: 'W Iowa Ave', p: [3746, 2296, 3995, 2360] },
  { name: 'W Olive Ave', p: [3708, 2436, 3945, 2520] },
  { name: 'S Bernardo Ave', p: [3598, 2870, 3643, 2545] },
  { name: 'Astoria Ave', p: [4496, 2630, 4558, 2390] },
  { name: 'n Ave', p: [4006, 2840, 4034, 2720] },
];

const curvedStreets = [
  { id: 'los-altos', name: 'Los Altos Ave', d: 'M232 758Q236 705 280 655L390 500' },
  { id: 'w-middlefield', name: 'W Middlefield Rd', d: 'M1764 40Q1930 140 2190 174' },
  { id: 'e-middlefield', name: 'E Middlefield Rd', d: 'M2998 872Q3130 872 3390 944' },
  { id: 'university', name: 'University Ave', d: 'M416 2602Q470 2740 690 2836' },
];

const shields = [
  { kind: 'state', text: '82', x: 1391, y: 1134 },
  { kind: 'state', text: '82', x: 2645, y: 1998 },
  { kind: 'state', text: '85', x: 2939, y: 527 },
  { kind: 'state', text: '85', x: 2996, y: 1508 },
  { kind: 'state', text: '85', x: 3059, y: 2540 },
  { kind: 'state', text: '85', x: 3158, y: 2778 },
  { kind: 'state', text: '237', x: 4498, y: 875 },
  { kind: 'state', text: '237', x: 3896, y: 1341 },
  { kind: 'state', text: '237', x: 3071, y: 1784 },
  { kind: 'county', text: 'G6', x: 990, y: 277 },
  { kind: 'county', text: 'G6', x: 1614, y: 619 },
  { kind: 'county', text: 'G6', x: 2309, y: 961 },
  { kind: 'county', text: 'G6', x: 3080, y: 1358 },
  { kind: 'county', text: 'G6', x: 4236, y: 1643 },
  { kind: 'county', text: 'G5', x: 649, y: 2585 },
  { kind: 'us', text: '101', x: 2721, y: 85 },
  { kind: 'us', text: '101', x: 3729, y: 447 },
];

const blockPath = (w: number, h: number, sx: number, sy: number) => {
  let d = '';
  for (let x = 0; x <= w; x += sx) d += `M${x} 0V${h}`;
  for (let y = 0; y <= h; y += sy) d += `M0 ${y}H${w}`;
  return d;
};

const Shield = ({ kind, text, x, y }: { kind: string; text: string; x: number; y: number }) => {
  const half = text.length === 3 ? 45 : 36;
  return (
    <g transform={`translate(${x} ${y})`}>
      {kind === 'state' && <rect x={-half} y={-30} width={half * 2} height={60} rx={30} fill="#fff" stroke="#6f747a" strokeWidth={5} />}
      {kind === 'county' && <rect x={-39} y={-25} width={78} height={50} fill="#fff" stroke="#6f747a" strokeWidth={5} />}
      {kind === 'us' && (
        <path
          d="M-42 -36Q-30 -30 -18 -34 -8 -38 0 -38 8 -38 18 -34 30 -30 42 -36L46 -22Q40 -14 45 4 50 24 36 29 20 31 8 31L0 35 -8 31Q-20 31 -36 29 -50 24 -45 4 -40 -14 -46 -22Z"
          fill="#fff"
          stroke="#6f747a"
          strokeWidth={5}
        />
      )}
      <text y={15} textAnchor="middle" fontSize={43} fill="#4a4f55">{text}</text>
    </g>
  );
};

const StreetMap = () => (
  <svg
    viewBox="60 39 4494 2802"
    preserveAspectRatio="xMidYMid slice"
    className="block h-full w-full bg-[#f2f3f9] font-[Roboto,sans-serif]"
    role="img"
    aria-label="Map of Mountain View"
  >
    <path d={parks} fill="#dfedca" />
    <g fill="none" stroke="#dae3eb" strokeWidth={5} strokeLinejoin="round">
      {blocks.map((b, i) => (
        <path key={i} transform={`translate(${b.x} ${b.y}) rotate(${b.a})`} d={blockPath(b.w, b.h, b.sx, b.sy)} />
      ))}
      {minorRoads.map((d, i) => (
        <path key={i} d={d} />
      ))}
    </g>
    <path d={creeks} fill="none" stroke="#c0cde8" strokeWidth={8} strokeLinejoin="round" />
    <path d={ponds} fill="#c0cde8" />
    <path d={trails} fill="none" stroke="#8ed6bd" strokeWidth={4} strokeLinejoin="round" />
    <g fill="none" stroke="#d6dee6" strokeLinejoin="round">
      {mainRoads.map((r) => (
        <path key={r.d} d={r.d} strokeWidth={r.w} />
      ))}
    </g>
    <g fill="none" stroke="#ccd6df" strokeLinejoin="round">
      {darkRoads.map((r) => (
        <path key={r.d} d={r.d} strokeWidth={r.w} />
      ))}
    </g>
    {/* expressways */}
    <g fill="none" stroke="#d6dee6" strokeLinejoin="round">
      <path strokeWidth={28} d="M40 1670L120 1810 240 2000 380 2240Q440 2350 500 2420L620 2550 780 2710 950 2860" />
      <path strokeWidth={38} d="M700 55L900 200 1040 310Q1120 370 1200 400L1350 470 1490 550 1660 640 1890 750 2100 850 2280 930 2520 1050 2810 1200 2990 1300 3120 1365" />
      <path strokeWidth={38} stroke="#ccd6df" d="M3040 1330L3270 1440 3490 1560 3640 1605" />
      <path strokeWidth={34} d="M3640 1605L3820 1675Q3900 1705 3950 1707 4040 1705 4090 1688L4220 1640 4310 1630 4570 1705" />
      <path strokeWidth={12} d="M60 200L180 30" />
      <path strokeWidth={8} stroke="#c3cdd8" d="M3480 360L3700 410 3880 455M4060 500L4300 590 4554 655M2990 1545L3120 1610" />
    </g>
    <path d={ramps} fill="none" stroke="#ecdba6" strokeWidth={16} />
    <path d={ramps} fill="none" stroke="#fff5d4" strokeWidth={9} />
    {highways.map((h) => (
      <g key={h.d} fill="none" strokeLinejoin="round">
        <path d={h.d} stroke="#ecdba6" strokeWidth={h.w + 5} />
        <path d={h.d} stroke="#fff5d4" strokeWidth={h.w - 3} />
      </g>
    ))}
    <path fill="none" stroke="#ecdba6" strokeWidth={3} d="M2620 50L2860 150M2680 90L2900 190M3810 465L4090 550M4130 1110L4290 1000M3000 1180L2985 1440M3010 1180L3008 1440" />

    {shields.map((s, i) => (
      <Shield key={i} {...s} />
    ))}

    <g fill="#3f5066" stroke="#fff" strokeWidth={10} strokeLinejoin="round" paintOrder="stroke" fontSize={50}>
      {streets.map(({ name, p: [x1, y1, x2, y2] }, i) => (
        <text
          key={i}
          textAnchor="middle"
          transform={`translate(${(x1 + x2) / 2} ${(y1 + y2) / 2}) rotate(${(Math.atan2(y2 - y1, x2 - x1) * 180) / Math.PI})`}
        >
          {name}
        </text>
      ))}
      <text transform="translate(3120 2274) rotate(24)" fontSize={54}>E El Camino Real</text>
      {curvedStreets.map((s) => (
        <React.Fragment key={s.id}>
          <path id={s.id} d={s.d} fill="none" stroke="none" />
          <text>
            <textPath href={`#${s.id}`}>{s.name}</textPath>
          </text>
        </React.Fragment>
      ))}
    </g>

    <g fill="#33383e" stroke="#fff" strokeWidth={12} strokeLinejoin="round" paintOrder="stroke" textAnchor="middle" fontWeight={500}>
      {areas.map((a) =>
        a.lines.map((line, i) => (
          <text key={line} x={a.x} y={a.y + i * 54} fontSize={54} className="tracking-widest">{line}</text>
        ))
      )}
      <text x={605} y={2025} fontSize={71}>Los Altos</text>
      <text x={2336} y={1418} fontSize={71}>Mountain</text>
      <text x={2336} y={1490} fontSize={71}>View</text>
    </g>

    {/* park pin */}
    <path d="M336 2478L306 2450Q283 2432 283 2408A53 53 0 0 1 389 2408Q389 2432 366 2450Z" fill="#fff" stroke="#cfd5da" strokeWidth={2} />
    <circle cx={336} cy={2408} r={45} fill="#7ba1b3" />
    <path d="M336 2380L352 2402H347L359 2420H341V2432H331V2420H313L325 2402H320Z" fill="#fff" />

    {/* driven route */}
    <path
      fill="none"
      stroke="#1070e0"
      strokeWidth={13}
      strokeLinejoin="round"
      d="M1852 872L1980 945 2100 1005 2210 1053Q2220 1056 2223 1080L2170 1200 2060 1400 2035 1440 1985 1540 1983 1570 2260 1740 2570 1940 2680 2000"
    />
    <circle cx={1899} cy={824} r={55} fill="#fff" stroke="#2a8bff" strokeWidth={16} />
    <circle cx={1898} cy={817} r={32} fill="#000" />
    <circle cx={2712} cy={2048} r={55} fill="#fff" stroke="#2a8bff" strokeWidth={16} />
    <text x={2712} y={2067} textAnchor="middle" fontSize={52} fontWeight={600} fill="#2a8bff" className="font-[Inter,sans-serif]">A</text>

    <text x={105} y={2808} fontSize={78} fontWeight={500} fill="#fff" stroke="#a5a8ad" strokeWidth={12} strokeLinejoin="round" paintOrder="stroke" className="font-[Lato,sans-serif]">
      Google
    </text>
  </svg>
);

const EventThumb = () => (
  <svg viewBox="0 0 269 144" preserveAspectRatio="xMidYMid slice" className="absolute inset-0 h-full w-full" aria-hidden="true">
    <defs>
      <linearGradient id="thumb-fade" x1="0" y1="0" x2="0" y2="1">
        <stop offset="0.12" stopColor="#fff" stopOpacity="0" />
        <stop offset="0.76" stopColor="#fff" />
      </linearGradient>
    </defs>
    <rect width="269" height="144" fill="#eff0f2" />
    <path d="M101 46L160 29 168 65 111 80ZM212 0H269V24L224 34Z" fill="#dfead0" />
    <path
      d="M36 18L105 0M56 1L66 33M92 2L98 24M129 0L137 32M183 3L188 17M210 0L222 34M99 46L110 82 171 67 161 28M110 82L74 92M140 78L147 101"
      fill="none"
      stroke="#fff"
      strokeWidth="4"
    />
    <path d="M0 15Q34 20 47 55L54 86Q58 104 64 112" fill="none" stroke="#94c4ff" strokeWidth="5" />
    <path d="M0 70L189 20 212 112M196 44L269 24" fill="none" stroke="#f9dc0f" strokeWidth="4" />
    <rect width="269" height="144" fill="url(#thumb-fade)" />
  </svg>
);

export default function App() {
  return (
    <div className="flex min-h-screen bg-white font-[Inter,sans-serif] text-[21px] leading-[30px] text-[#12263f]">
      <aside className="flex w-[434px] shrink-0 flex-col bg-[#f4f6f8] pt-[22px] pr-9 pb-[30px] pl-5">
        <button type="button" aria-label="Back" className="w-8">
          <ArrowLeft size={30} strokeWidth={2} />
        </button>
        <h2 className="mt-6 text-[28px] leading-10 font-bold">Coaching Session</h2>
        <div className="mt-9 flex h-9 items-center gap-3">
          <span className="flex size-9 items-center justify-center rounded-full bg-[#5624d0] text-white">D</span>
          <a href="#driver" className="underline underline-offset-4">Darcy C.</a>
        </div>
        <h3 className="mt-[52px] px-6 font-semibold">EFFICIENCY</h3>
        <button type="button" className="mt-4 flex h-[68px] items-center rounded-[22px] bg-[#e4e8ed] px-6 font-bold">
          <Circle size={21} strokeWidth={2} className="mr-3" />
          Idling
          <span className="ml-auto">4</span>
        </button>
        <a href="#summary" className="mt-4 px-6 text-[#64748b]">Summary</a>
        <div className="mt-12 flex items-center justify-between border-t border-[#e1e5ea] pt-8 pr-9 pl-9">
          <h3 className="text-[24px] leading-[34px]">Behavior Notes</h3>
          <button type="button" aria-label="Add note">
            <MdAdd size={30} />
          </button>
        </div>
        <button type="button" className="mt-auto h-[59px] self-start rounded-xl border border-[#cbd2da] bg-white px-6">
          End Session
        </button>
      </aside>

      <main className="flex min-w-0 flex-1 flex-col">
        <div className="flex-1 px-8 pt-6 pb-[72px]">
          <div className="mx-auto w-full max-w-[1571px] lg:translate-x-3">
            <h1 className="text-[36px] leading-[48px] font-bold text-black">Idling</h1>
            <p className="mt-7 flex items-center gap-3 text-[#64748b]">
              <MdHistory size={26} />
              Behavior never coached
            </p>
            <p className="mt-4 flex items-center gap-3 text-[#64748b]">
              <MdVerifiedUser size={26} />
              <span>
                Coaching Type: <span className="text-[#12263f]">With Manager</span>
              </span>
            </p>

            <div className="mt-[74px] flex h-[59px] items-center justify-between">
              <div className="flex items-baseline gap-9 pb-1">
                <h2 className="text-[28px] leading-10 font-medium">Events</h2>
                <div className="flex items-center">
                  <label htmlFor="sort">Sort:</label>
                  <select id="sort" className="field-sizing-content appearance-none bg-transparent">
                    <option>Newest</option>
                  </select>
                  <MdArrowDropDown size={30} className="ml-1" />
                </div>
              </div>
              <div className="flex items-center gap-3">
                <span className="mr-3">1 of 4 events</span>
                <button type="button" disabled aria-label="Previous event" className="flex size-[59px] items-center justify-center rounded-xl border border-[#cbd2da] bg-[#f4f6f8] text-[#64748b]">
                  <MdChevronLeft size={28} />
                </button>
                <button type="button" aria-label="Next event" className="flex size-[59px] items-center justify-center rounded-xl border border-[#cbd2da]">
                  <MdChevronRight size={28} />
                </button>
              </div>
            </div>

            <div className="mt-6 flex flex-wrap gap-[13px] pl-1.5">
              {events.map((event) => (
                <div key={event.date} className="w-[269px]">
                  <button type="button" className="relative block h-36 w-full overflow-hidden rounded-xl border border-[#e1e5ea] text-left">
                    <EventThumb />
                    <span className="absolute bottom-2.5 left-6 text-[24px] leading-[34px] font-bold text-black">{event.duration}</span>
                    {event.selected && (
                      <span className="absolute -inset-px flex items-center justify-center bg-black/70 text-white">
                        <MdCheckCircle size={36} />
                      </span>
                    )}
                  </button>
                  <p className="mt-1 text-[19px] leading-[30px] text-[#64748b]">{event.date}</p>
                </div>
              ))}
            </div>

            <section className="mt-[53px] grid grid-cols-5 gap-12 rounded-3xl border border-[#e3e7eb] px-9 pt-9 pb-10">
              {stats.map((stat) => (
                <div key={stat.label} className="pt-1">
                  <p className="text-[24px] leading-[34px] font-semibold">{stat.value}</p>
                  <p className="mt-2 text-[#64748b]">{stat.label}</p>
                </div>
              ))}
              <div>
                <button type="button" className="h-[59px] rounded-xl border border-[#cbd2da] px-6 whitespace-nowrap">View details</button>
              </div>
            </section>

            <section className="mt-[72px] rounded-3xl border border-[#e3e7eb]">
              <header className="flex items-center justify-between border-b-2 border-[#e3e7eb] py-[23px] pr-12 pl-9">
                <div className="text-[#64748b]">
                  <h3 className="font-medium text-[#12263f]">Idling</h3>
                  <p>
                    Jul 13, 11:40 AM • <a href="#vehicle" className="text-[#12263f] underline underline-offset-4">Rose Vehicle</a>
                  </p>
                  <p>96 West El Camino Real, Mountain View, CA, 94109</p>
                </div>
                <button type="button" aria-label="More options">
                  <MdMoreHoriz size={32} />
                </button>
              </header>
              <div className="px-9 py-6">
                <div className="relative h-[934px] overflow-hidden">
                  <StreetMap />
                  <div className="absolute top-[15px] left-[15px] flex w-[60px] flex-col items-center bg-white text-[#666] shadow-md">
                    <button type="button" aria-label="Zoom in" className="flex h-[61px] w-full items-center justify-center">
                      <svg width="24" height="24" viewBox="0 0 24 24" fill="none" stroke="currentColor" strokeWidth="4"><path d="M12 0v24M0 12h24" /></svg>
                    </button>
                    <span className="h-px w-11 bg-[#e6e6e6]" />
                    <button type="button" aria-label="Zoom out" className="flex h-[60px] w-full items-center justify-center">
                      <svg width="24" height="24" viewBox="0 0 24 24" fill="none" stroke="currentColor" strokeWidth="4"><path d="M0 12h24" /></svg>
                    </button>
                  </div>
                  <button type="button" aria-label="Toggle full screen" className="absolute top-3 right-3 flex size-[59px] items-center justify-center rounded-xl border border-[#cbd2da] bg-white">
                    <MdFullscreen size={30} />
                  </button>
                  <button type="button" aria-label="Map camera controls" className="absolute right-[15px] bottom-9 flex size-[60px] items-center justify-center rounded-full bg-white shadow-md">
                    <svg width="34" height="34" viewBox="0 0 34 34" fill="none" stroke="#666" strokeWidth="4">
                      <path d="M12 7l5-5 5 5M12 27l5 5 5-5M7 12l-5 5 5 5M27 12l5 5-5 5" />
                    </svg>
                  </button>
                  <div className="absolute right-0 bottom-0 flex h-[21px] items-center gap-[19px] bg-[#f5f5f5]/80 pr-2 pl-2 font-[Roboto,sans-serif] text-[15px] leading-5 text-black">
                    <button type="button">Keyboard shortcuts</button>
                    <span>Map data ©2025 Google</span>
                    <span className="flex items-center gap-1.5">
                      500 m
                      <span className="h-[9px] w-[102px] border-x-2 border-b-3 border-black" />
                    </span>
                    <a href="#terms">Terms</a>
                  </div>
                </div>
              </div>
            </section>
          </div>
        </div>

        <footer className="flex h-[102px] items-start justify-between border-t border-[#e1e5ea] pt-6 pr-2.5 pl-9">
          <span className="leading-[59px] text-[#64748b]">Coach: Claire D.</span>
          <button type="button" className="h-[59px] rounded-xl bg-[#0369ea] px-[25px] text-white">Mark behavior as coached</button>
        </footer>
      </main>

      <button
        type="button"
        aria-label="Open assistant"
        className="fixed right-2 bottom-24 flex size-[82px] items-center justify-center rounded-full bg-linear-to-r from-[#3d87e8] to-[#c043a8] shadow-[0_6px_24px_rgba(0,0,0,0.16)]"
      >
        <span className="flex size-[75px] items-center justify-center rounded-full bg-[#12263f]">
          <svg width="26" height="34" viewBox="0 0 26 34" fill="none" stroke="#fff" strokeWidth="2.6">
            <rect x="1.3" y="1.3" width="23.4" height="31.4" rx="11.7" />
            <rect x="6.2" y="6.4" width="13.6" height="21.2" rx="6.8" />
            <path d="M13 12.5v9" strokeWidth="3.4" strokeLinecap="round" />
          </svg>
        </span>
      </button>
    </div>
  );
}
